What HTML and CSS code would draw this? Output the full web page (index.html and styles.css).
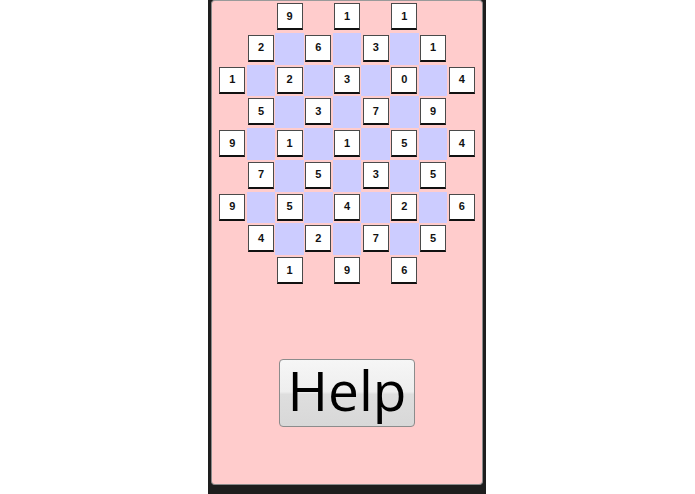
FILE: index.html
```html
<!DOCTYPE html>
<html>
<head>
<meta charset="utf-8">
<link rel="stylesheet" href="styles.css">
</head>
<body>
<div class="frame">
  <div class="panel">
    <div class="board">
      <div class="e"></div><div class="e"></div><div class="t"><span class="k">9</span></div><div class="e"></div><div class="t"><span class="k">1</span></div><div class="e"></div><div class="t"><span class="k">1</span></div><div class="e"></div><div class="e"></div>
      <div class="e"></div><div class="t"><span class="k">2</span></div><div class="b"></div><div class="t"><span class="k">6</span></div><div class="b"></div><div class="t"><span class="k">3</span></div><div class="b"></div><div class="t"><span class="k">1</span></div><div class="e"></div>
      <div class="t"><span class="k">1</span></div><div class="b"></div><div class="t"><span class="k">2</span></div><div class="b"></div><div class="t"><span class="k">3</span></div><div class="b"></div><div class="t"><span class="k">0</span></div><div class="b"></div><div class="t"><span class="k">4</span></div>
      <div class="e"></div><div class="t"><span class="k">5</span></div><div class="b"></div><div class="t"><span class="k">3</span></div><div class="b"></div><div class="t"><span class="k">7</span></div><div class="b"></div><div class="t"><span class="k">9</span></div><div class="e"></div>
      <div class="t"><span class="k">9</span></div><div class="b"></div><div class="t"><span class="k">1</span></div><div class="b"></div><div class="t"><span class="k">1</span></div><div class="b"></div><div class="t"><span class="k">5</span></div><div class="b"></div><div class="t"><span class="k">4</span></div>
      <div class="e"></div><div class="t"><span class="k">7</span></div><div class="b"></div><div class="t"><span class="k">5</span></div><div class="b"></div><div class="t"><span class="k">3</span></div><div class="b"></div><div class="t"><span class="k">5</span></div><div class="e"></div>
      <div class="t"><span class="k">9</span></div><div class="b"></div><div class="t"><span class="k">5</span></div><div class="b"></div><div class="t"><span class="k">4</span></div><div class="b"></div><div class="t"><span class="k">2</span></div><div class="b"></div><div class="t"><span class="k">6</span></div>
      <div class="e"></div><div class="t"><span class="k">4</span></div><div class="b"></div><div class="t"><span class="k">2</span></div><div class="b"></div><div class="t"><span class="k">7</span></div><div class="b"></div><div class="t"><span class="k">5</span></div><div class="e"></div>
      <div class="e"></div><div class="e"></div><div class="t"><span class="k">1</span></div><div class="e"></div><div class="t"><span class="k">9</span></div><div class="e"></div><div class="t"><span class="k">6</span></div><div class="e"></div><div class="e"></div>
    </div>
    <button class="help">Help</button>
  </div>
</div>
</body>
</html>
```

FILE: styles.css
```css
html, body {
  margin: 0;
  padding: 0;
  background: #ffffff;
}
body {
  width: 695px;
  height: 494px;
  overflow: hidden;
}
.frame {
  margin-left: 208px;
  width: 278px;
  height: 494px;
  box-sizing: border-box;
  background: #1e1e1e;
  padding: 0 3px 9px 3px;
  display: flex;
}
.panel {
  flex: 1;
  background: #ffcccc;
  border: 1px solid #8a8a8a;
  border-top-color: #9a9a9a;
  border-radius: 4px;
  display: flex;
  flex-direction: column;
  align-items: center;
}
.board {
  display: grid;
  grid-template-columns: repeat(9, 28.7px);
  grid-template-rows: repeat(9, 31.75px);
}
.b {
  background: #ccccff;
}
.t {
  align-self: start;
  justify-self: center;
  margin-top: 2px;
  width: 26px;
  height: 27px;
  box-sizing: border-box;
  background: #ffffff;
  border: 1px solid #4a4a4a;
  border-bottom: 2px solid #111111;
  display: flex;
  align-items: center;
  justify-content: center;
}
.k {
  font-family: "Liberation Sans", Arial, sans-serif;
  font-weight: bold;
  font-size: 11px;
  line-height: 1;
  color: #111111;
}
.help {
  margin-top: 72px;
  width: 136px;
  height: 68px;
  box-sizing: border-box;
  border: 1px solid #8c8c8c;
  border-radius: 4px;
  background: linear-gradient(#f6f6f6 0%, #eeeeee 48%, #dedede 52%, #d8d8d8 100%);
  font-family: "Open Sans", "DejaVu Sans", sans-serif;
  font-size: 55px;
  line-height: 1;
  color: #000000;
  padding: 0 0 6px 0;
  display: flex;
  align-items: center;
  justify-content: center;
}
```
